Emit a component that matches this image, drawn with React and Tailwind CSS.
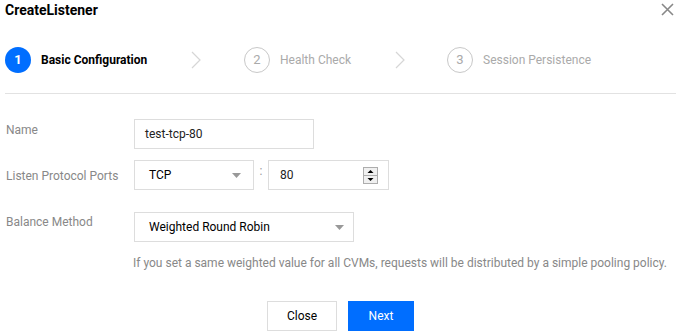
import React from "react";

function Chevron() {
  return (
    <svg width="10" height="18" viewBox="0 0 10 18" className="block">
      <path d="M1 1 L9 9 L1 17" fill="none" stroke="#d6d6d6" strokeWidth="1.2" />
    </svg>
  );
}

function Caret() {
  return (
    <svg width="9" height="5" viewBox="0 0 9 5" className="block">
      <path d="M0 0 L9 0 L4.5 5 Z" fill="#999" />
    </svg>
  );
}

function Spinner() {
  return (
    <svg width="15" height="17" viewBox="0 0 15 17" className="block">
      <rect x="0.5" y="0.5" width="14" height="16" fill="#f0f0f0" stroke="#adadad" />
      <line x1="1" y1="8.5" x2="14" y2="8.5" stroke="#adadad" />
      <path d="M4.5 6 L10.5 6 L7.5 3 Z" fill="#000" />
      <path d="M4.5 11 L10.5 11 L7.5 14 Z" fill="#000" />
    </svg>
  );
}

function Step({ n, label, active, className }) {
  return (
    <div className={"flex items-center " + (className || "")}>
      {active ? (
        <div className="w-[26px] h-[26px] rounded-full bg-[#006eff] text-white flex items-center justify-center text-[13px] font-bold">{n}</div>
      ) : (
        <div className="w-[26px] h-[26px] rounded-full border border-[#c8c8c8] text-[#aaa] flex items-center justify-center text-[13px]">{n}</div>
      )}
      <span className={active ? "ml-[10px] font-bold text-black" : "ml-[10px] text-[#aaa]"}>{label}</span>
    </div>
  );
}

export default function App() {
  return (
    <div className="w-[676px] h-[336px] overflow-hidden bg-white text-[12px] [font-family:Roboto,'Noto_Sans',sans-serif]">
      <div className="flex justify-between items-start pl-[5px] pr-[2px] h-[20px]">
        <div className="text-[14px] leading-[20px] font-bold text-black">CreateListener</div>
        <svg width="13" height="13" viewBox="0 0 13 13" className="mt-[3px]">
          <path d="M1 1 L12 12 M12 1 L1 12" stroke="#888" strokeWidth="1.6" />
        </svg>
      </div>

      <div className="flex items-center mt-[27px] pl-[5px] h-[26px]">
        <Step n="1" label="Basic Configuration" active className="w-[186px]" />
        <div className="w-[53px]"><Chevron /></div>
        <Step n="2" label="Health Check" className="w-[151px]" />
        <div className="w-[52px]"><Chevron /></div>
        <Step n="3" label="Session Persistence" />
      </div>

      <div className="mt-[20px] ml-[5px] h-px bg-[#e2e2e2]" />

      <div className="mt-[25px]">
        <div className="flex">
          <div className="w-[134px] pl-[6px] pt-[2px] text-[#888] leading-[18px]">Name</div>
          <div className="w-[180px] h-[30px] border border-[#ddd] flex items-center pl-[10px] text-[#222]">test-tcp-80</div>
        </div>

        <div className="flex mt-[11px]">
          <div className="w-[134px] pl-[6px] pt-[7px] text-[#888] leading-[18px]">Listen Protocol Ports</div>
          <div className="w-[120px] h-[30px] border border-[#ddd] flex items-center justify-between pl-[14px] pr-[12px] text-black">
            <span>TCP</span>
            <Caret />
          </div>
          <div className="w-[14px] text-[#999] text-center leading-[20px] pt-[1px]">:</div>
          <div className="w-[121px] h-[30px] border border-[#ddd] flex items-center justify-between pl-[11px] pr-[10px] text-[#222]">
            <span>80</span>
            <Spinner />
          </div>
        </div>

        <div className="flex mt-[22px]">
          <div className="w-[134px] pl-[6px] pt-[1px] text-[#888] leading-[18px]">Balance Method</div>
          <div className="w-[220px] h-[30px] border border-[#ddd] flex items-center justify-between pl-[14px] pr-[9px] text-black">
            <span>Weighted Round Robin</span>
            <Caret />
          </div>
        </div>

        <div className="mt-[12px] pl-[133px] text-[#888] leading-[18px] whitespace-nowrap">
          If you set a same weighted value for all CVMs, requests will be distributed by a simple pooling policy.
        </div>

        <div className="mt-[29px] flex justify-center pl-[5px] gap-[11px]">
          <button className="w-[70px] h-[30px] border border-[#ddd] bg-white text-black text-[12px]">Close</button>
          <button className="w-[66px] h-[30px] bg-[#006eff] text-white text-[12px]">Next</button>
        </div>
      </div>
    </div>
  );
}
